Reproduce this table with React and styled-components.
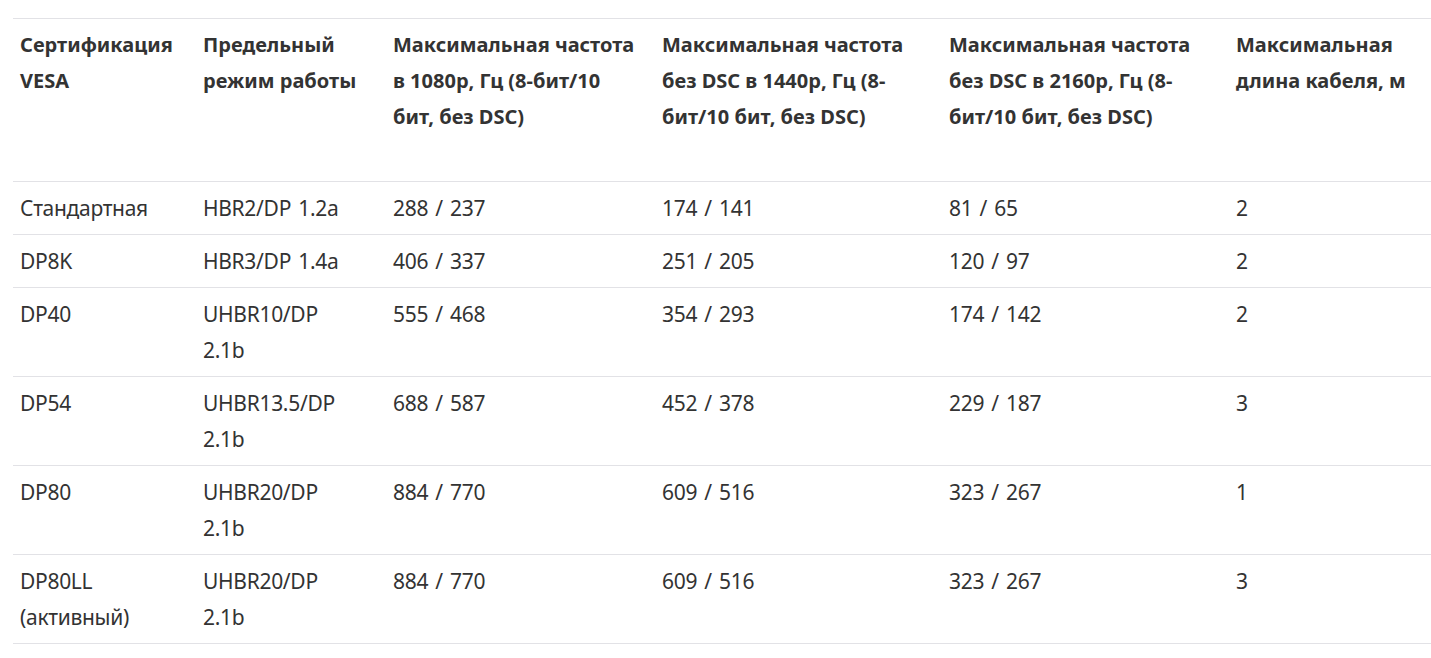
import styled, { createGlobalStyle } from 'styled-components';

const GlobalStyle = createGlobalStyle`
  body {
    margin: 0;
    background: #fff;
  }
`;

const columns = [183, 190, 269, 287, 287, 202];

const headers = [
  ['Сертификация', 'VESA'],
  ['Предельный', 'режим работы'],
  ['Максимальная частота', 'в 1080р, Гц (8-бит/10', 'бит, без DSC)'],
  ['Максимальная частота', 'без DSC в 1440р, Гц (8-', 'бит/10 бит, без DSC)'],
  ['Максимальная частота', 'без DSC в 2160р, Гц (8-', 'бит/10 бит, без DSC)'],
  ['Максимальная', 'длина кабеля, м'],
];

const rows = [
  [['Стандартная'], ['HBR2/DP 1.2a'], ['288 / 237'], ['174 / 141'], ['81 / 65'], ['2']],
  [['DP8K'], ['HBR3/DP 1.4a'], ['406 / 337'], ['251 / 205'], ['120 / 97'], ['2']],
  [['DP40'], ['UHBR10/DP', '2.1b'], ['555 / 468'], ['354 / 293'], ['174 / 142'], ['2']],
  [['DP54'], ['UHBR13.5/DP', '2.1b'], ['688 / 587'], ['452 / 378'], ['229 / 187'], ['3']],
  [['DP80'], ['UHBR20/DP', '2.1b'], ['884 / 770'], ['609 / 516'], ['323 / 267'], ['1']],
  [['DP80LL', '(активный)'], ['UHBR20/DP', '2.1b'], ['884 / 770'], ['609 / 516'], ['323 / 267'], ['3']],
];

// each cell is a list of lines, broken where the source table breaks them
const Lines = ({ parts }) =>
  parts.map((p, i) => (
    <span key={i}>
      {i > 0 && <br />}
      {p}
    </span>
  ));

const App = () => {
  return (
    <Page>
      <GlobalStyle />
      <SpecTable>
        <colgroup>
          {columns.map((w, i) => (
            <Col key={i} $width={w} />
          ))}
        </colgroup>
        <thead>
          <tr>
            {headers.map((h, i) => (
              <HeadCell key={i}>
                <Lines parts={h} />
              </HeadCell>
            ))}
          </tr>
        </thead>
        <tbody>
          {rows.map((r, i) => (
            <tr key={i}>
              {r.map((c, j) => (
                <Cell key={j}>
                  <Lines parts={c} />
                </Cell>
              ))}
            </tr>
          ))}
        </tbody>
      </SpecTable>
    </Page>
  );
};

const Page = styled.div`
  padding: 18px 0 0 13px;
  font-family: 'Noto Sans', 'Open Sans', sans-serif;
  color: #333;
`;

const SpecTable = styled.table`
  width: 1418px;
  table-layout: fixed;
  border-collapse: collapse;
  border-top: 1px solid #e2e2e6;
  line-height: 36px;
`;

const Col = styled.col`
  width: ${(p) => p.$width}px;
`;

const HeadCell = styled.th`
  text-align: left;
  vertical-align: top;
  font-size: 20px;
  font-weight: 700;
  white-space: nowrap;
  padding: 8px 7px 46px;
  border-bottom: 1px solid #e2e2e6;
`;

const Cell = styled.td`
  vertical-align: top;
  font-size: 21px;
  letter-spacing: -0.3px;
  word-spacing: 2px;
  white-space: nowrap;
  padding: 8px 7px;
  border-bottom: 1px solid #e2e2e6;
`;

export default App;
